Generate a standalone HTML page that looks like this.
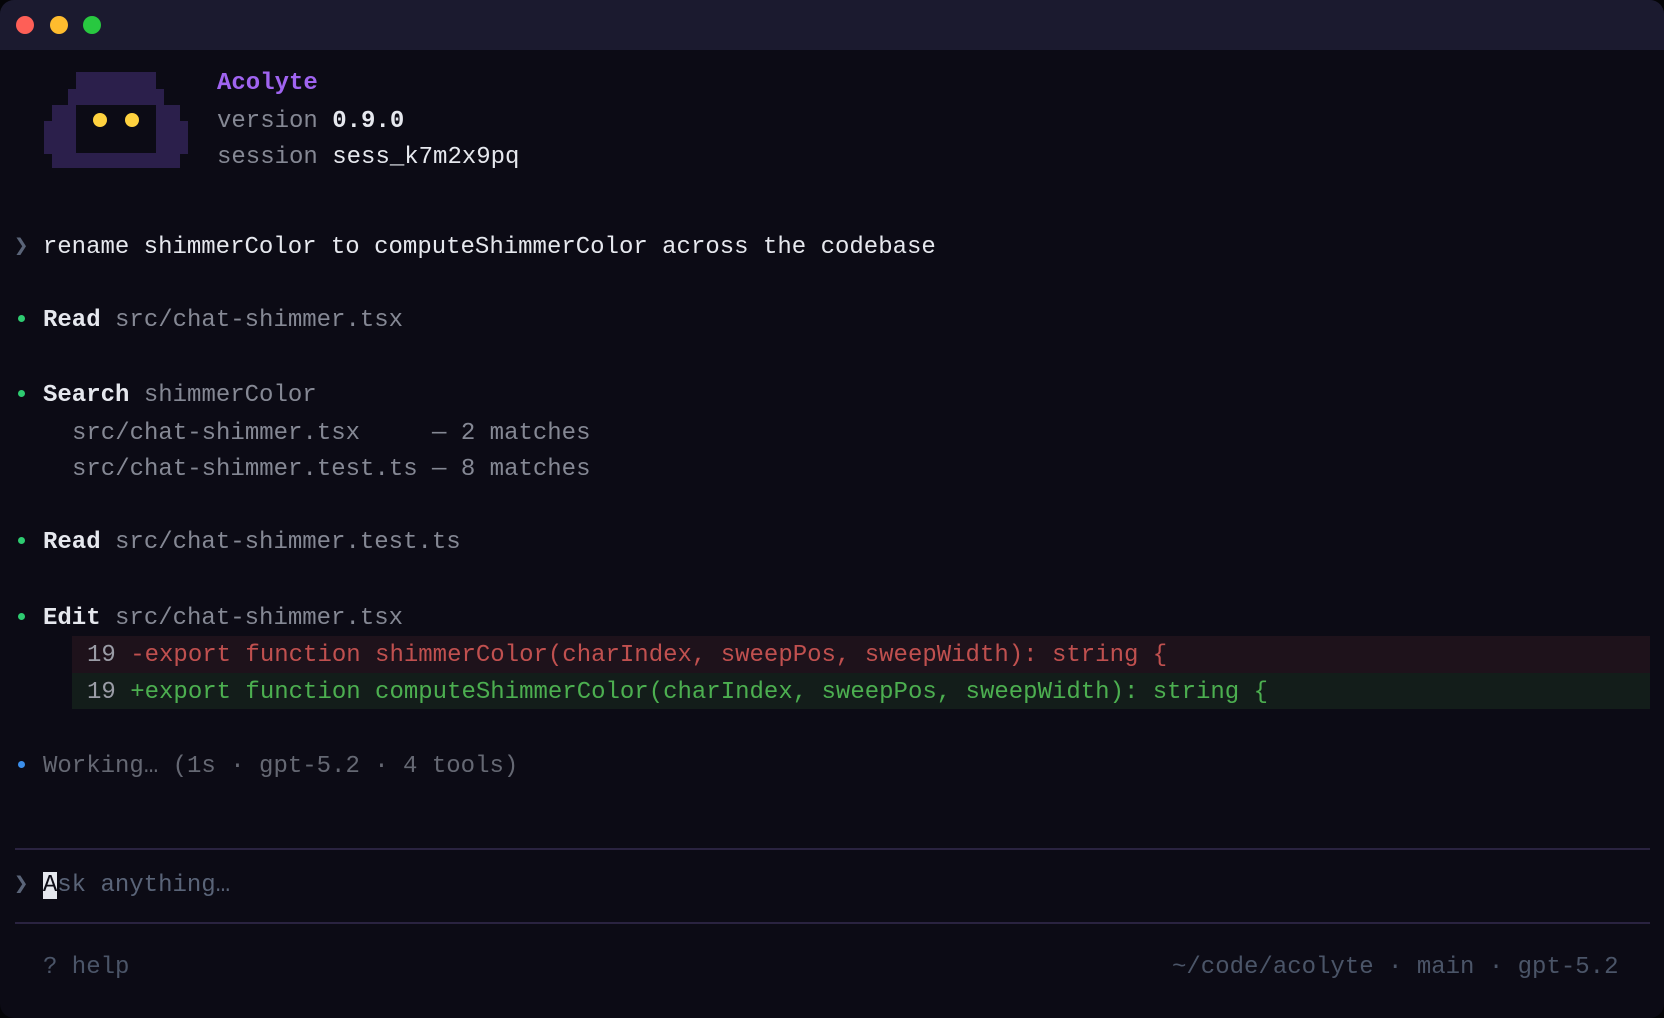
<!DOCTYPE html>
<html><head><meta charset="utf-8"><style>
html,body{margin:0;padding:0;background:#050508;width:1664px;height:1018px;overflow:hidden}
.win{position:absolute;left:0;top:0;width:1664px;height:1018px;background:#0c0b15;border-radius:14px;overflow:hidden}
.tb{position:absolute;left:0;top:0;width:100%;height:50px;background:#1b1a2f}
.d{position:absolute;top:16px;width:18px;height:18px;border-radius:50%}
.t{position:absolute;font-family:"Liberation Mono",monospace;font-size:24px;line-height:28px;white-space:pre;color:#e6e8ee}
.g{color:#858894}.b{font-weight:bold}
.dot{position:absolute;width:7px;height:7px;border-radius:50%}
.px{position:absolute;background:#2b1f4b}
.sep{position:absolute;left:15px;width:1635px;height:2px;background:#2a2340}
</style></head><body><div class="win">
<div class="tb"></div>
<div class="d" style="left:16px;background:#fe5f57"></div>
<div class="d" style="left:50px;background:#febc2e"></div>
<div class="d" style="left:83px;background:#28c840"></div>

<div class="px" style="left:76px;top:72px;width:80px;height:18px"></div>
<div class="px" style="left:68px;top:89px;width:96px;height:17px"></div>
<div class="px" style="left:52px;top:105px;width:128px;height:17px"></div>
<div class="px" style="left:44px;top:121px;width:144px;height:33px"></div>
<div class="px" style="left:52px;top:153px;width:128px;height:15px"></div>
<div style="position:absolute;left:76px;top:105px;width:80px;height:48px;background:#0c0b15"></div>
<div style="position:absolute;left:93px;top:113px;width:14px;height:14px;border-radius:50%;background:#ffd23f"></div>
<div style="position:absolute;left:125px;top:113px;width:14px;height:14px;border-radius:50%;background:#ffd23f"></div>

<div class="t b" style="left:217px;top:70px;color:#a064f0">Acolyte</div>
<div class="t" style="left:217px;top:108px"><span class="g">version</span> <span class="b">0.9.0</span></div>
<div class="t" style="left:217px;top:144px"><span class="g">session</span> sess_k7m2x9pq</div>

<div class="t" style="left:14px;top:234px"><span style="color:#5a6478">❯</span> rename shimmerColor to computeShimmerColor across the codebase</div>

<div class="dot" style="left:18px;top:315px;background:#2ecc71"></div>
<div class="t" style="left:43px;top:307px"><span class="b">Read</span> <span class="g">src/chat-shimmer.tsx</span></div>

<div class="dot" style="left:18px;top:390px;background:#2ecc71"></div>
<div class="t" style="left:43px;top:382px"><span class="b">Search</span> <span class="g">shimmerColor</span></div>
<div class="t g" style="left:72px;top:420px">src/chat-shimmer.tsx     — 2 matches</div>
<div class="t g" style="left:72px;top:456px">src/chat-shimmer.test.ts — 8 matches</div>

<div class="dot" style="left:18px;top:537px;background:#2ecc71"></div>
<div class="t" style="left:43px;top:529px"><span class="b">Read</span> <span class="g">src/chat-shimmer.test.ts</span></div>

<div class="dot" style="left:18px;top:613px;background:#2ecc71"></div>
<div class="t" style="left:43px;top:605px"><span class="b">Edit</span> <span class="g">src/chat-shimmer.tsx</span></div>
<div style="position:absolute;left:72px;top:636px;width:1578px;height:37px;background:#1e121b"></div>
<div style="position:absolute;left:72px;top:673px;width:1578px;height:36px;background:#131d1a"></div>
<div class="t" style="left:87px;top:642px;color:#c0504f"><span style="color:#9a9ca6">19</span> -export function shimmerColor(charIndex, sweepPos, sweepWidth): string {</div>
<div class="t" style="left:87px;top:679px;color:#4caf50"><span style="color:#9a9ca6">19</span> +export function computeShimmerColor(charIndex, sweepPos, sweepWidth): string {</div>

<div class="dot" style="left:18px;top:761px;background:#3b8eea"></div>
<div class="t" style="left:43px;top:753px;color:#656873">Working… (1s · gpt-5.2 · 4 tools)</div>

<div class="sep" style="top:848px"></div>
<div class="t" style="left:14px;top:872px;color:#5a6478">❯ <span style="background:#e6e8ee;color:#0c0b15">A</span>sk anything…</div>
<div class="sep" style="top:922px"></div>

<div class="t" style="left:43px;top:954px;color:#4b5568">? help</div>
<div class="t" style="left:1172px;top:954px;color:#4b5568">~/code/acolyte · main · gpt-5.2</div>
</div></body></html>
